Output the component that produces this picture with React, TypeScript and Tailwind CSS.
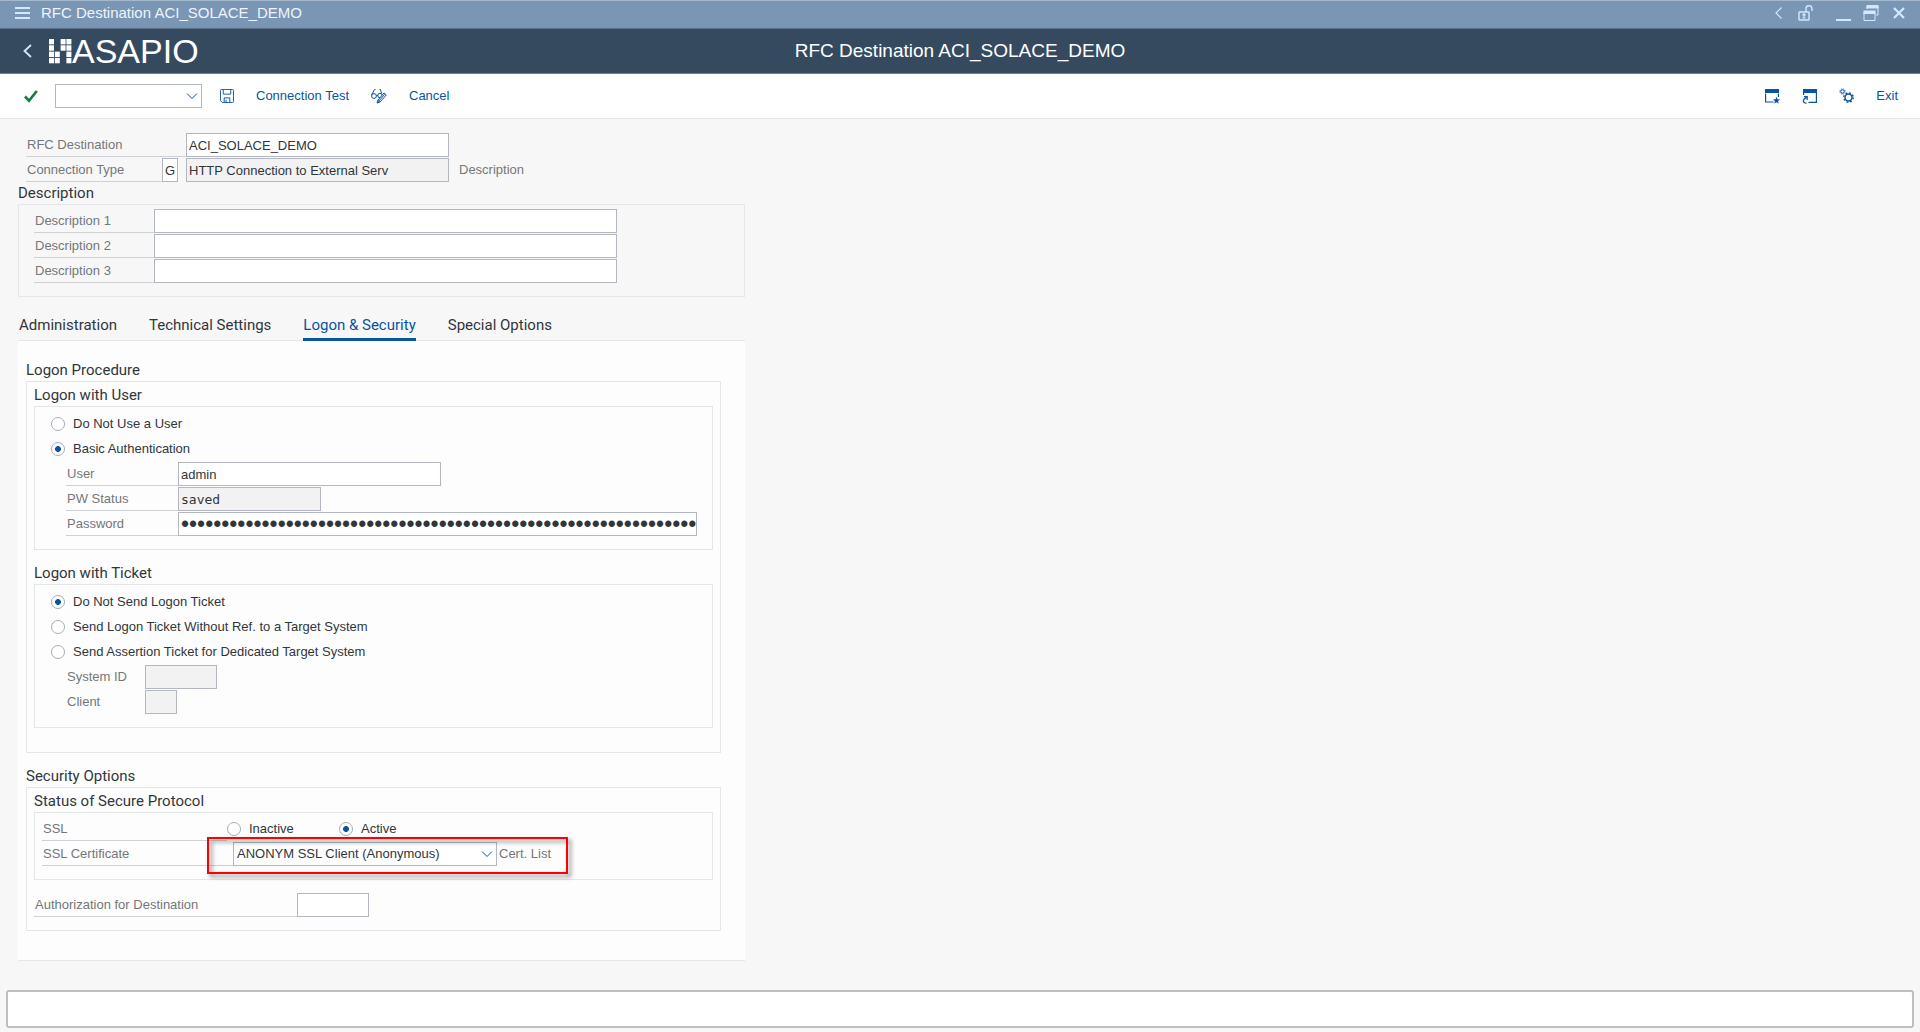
import type { ReactNode } from "react";

const title = "RFC Destination ACI_SOLACE_DEMO";
const tabs = ["Administration", "Technical Settings", "Logon & Security", "Special Options"];
const activeTab = "Logon & Security";
const descriptions = ["Description 1", "Description 2", "Description 3"];
const logoRows = ["1011", "1011", "1101", "1101"];

const box = "h-6 shrink-0 border border-[#b3b8c0] text-[#32363a] outline-none";

type LabelProps = { htmlFor?: string; className: string; line?: boolean; children: ReactNode };

function Label({ htmlFor, className, line = true, children }: LabelProps) {
  return (
    <label
      htmlFor={htmlFor}
      className={`h-6 shrink-0 border-b pl-px leading-6 text-[#74777a] ${line ? "border-[#cfd1d4]" : "border-transparent"} ${className}`}
    >
      {children}
    </label>
  );
}

type FieldProps = {
  id: string;
  label: string;
  value?: string;
  labelClass: string;
  inputClass: string;
  line?: boolean;
  readOnly?: boolean;
  type?: string;
};

function Field({ id, label, value = "", labelClass, inputClass, line, readOnly = false, type = "text" }: FieldProps) {
  return (
    <div className="flex h-[25px] items-start">
      <Label htmlFor={id} className={labelClass} line={line}>
        {label}
      </Label>
      <input
        id={id}
        type={type}
        defaultValue={value}
        readOnly={readOnly}
        className={`${box} pl-0.5 ${readOnly ? "bg-[#f2f2f2]" : "bg-white"} ${inputClass}`}
      />
    </div>
  );
}

type RadioProps = { name: string; label: string; checked?: boolean; className?: string };

function Radio({ name, label, checked = false, className = "" }: RadioProps) {
  return (
    <label className={`mb-px flex h-6 items-center gap-2 text-[#32363a] ${className}`}>
      <input
        type="radio"
        name={name}
        defaultChecked={checked}
        className="size-[14px] shrink-0 appearance-none rounded-full border border-[#a5adb6] bg-white checked:bg-[radial-gradient(circle,#0854a0_0_2.6px,transparent_3.2px)]"
      />
      {label}
    </label>
  );
}

function Group({ title, className = "", children }: { title: string; className?: string; children: ReactNode }) {
  return (
    <section>
      <h2 className="font-[Roboto,sans-serif] text-[15px] leading-[21px] text-[#32363a]">{title}</h2>
      <div className={`border border-[#e5e6e7] ${className}`}>{children}</div>
    </section>
  );
}

type SelectProps = { id: string; label?: string; value?: string; className: string };

function Select({ id, label, value = "", className }: SelectProps) {
  return (
    <div className={`relative h-6 ${className}`}>
      <select id={id} aria-label={label} className={`${box} w-full appearance-none bg-white pl-[3px]`}>
        <option>{value}</option>
      </select>
      <svg viewBox="0 0 12 12" className="pointer-events-none absolute top-1.5 right-1 size-3" fill="none" stroke="#0854a0">
        <path d="M1 3.5 6 8.5 11 3.5" />
      </svg>
    </div>
  );
}

function Logo() {
  return (
    <div className="flex items-center text-white">
      <svg viewBox="0 0 23 25" className="h-[25px] w-[23px]" fill="currentColor">
        {logoRows.map((row, y) =>
          [...row].map((cell, x) =>
            cell === "1" ? <rect key={`${x}-${y}`} x={x * 5.8} y={y * 6.3} width="5" height="5.4" /> : null
          )
        )}
      </svg>
      <span className="text-[34px] leading-none">ASAPIO</span>
    </div>
  );
}

function TopBar() {
  return (
    <div className="flex h-7 items-center border-t border-[#a3b8cd] bg-[#7996b5] pr-[15px] pb-1 pl-[15px] text-[#d1e8ff]">
      <button aria-label="Menu" className="mr-[11px]">
        <svg viewBox="0 0 15 14" className="h-[14px] w-[15px]" fill="currentColor">
          <path d="M0 1h15v2H0zM0 6h15v2H0zM0 11h15v2H0z" />
        </svg>
      </button>
      <span className="text-[15px] leading-6 text-[#edf4fb]">{title}</span>
      <div className="ml-auto flex items-center">
        <button aria-label="Previous" className="mr-4">
          <svg viewBox="0 0 7 12" className="h-3 w-[7px]" fill="none" stroke="currentColor" strokeWidth="1.2">
            <path d="M6.5.5 1 6l5.5 5.5" />
          </svg>
        </button>
        <button aria-label="Unlock" className="mr-[22px]">
          <svg viewBox="0 0 16 16" className="size-4" fill="none" stroke="currentColor" strokeWidth="1.4">
            <rect x="1" y="7" width="10" height="8" rx=".6" />
            <path d="M8 7V4a3 3 0 0 1 6-.5V6" />
            <path d="M6 9v4M4.5 10.2 6 8.8l1.5 1.4M4.5 13h3" strokeWidth="1.2" />
          </svg>
        </button>
        <button aria-label="Minimize" className="mr-3">
          <svg viewBox="0 0 15 16" className="h-4 w-[15px]" stroke="currentColor" strokeWidth="2">
            <path d="M0 15h15" />
          </svg>
        </button>
        <button aria-label="Restore" className="mr-[14px]">
          <svg viewBox="0 0 16 16" className="size-4" fill="none" stroke="currentColor">
            <path d="M4 4V1.5h11V10h-2" />
            <path d="M3.5 0h12v3.5h-12zM.5 5.500h12V9H.5z" fill="currentColor" stroke="none" />
            <path d="M1 7h11v8.5H1z" />
          </svg>
        </button>
        <button aria-label="Close">
          <svg viewBox="0 0 12 12" className="size-3" stroke="currentColor" strokeWidth="2.2">
            <path d="m1 1 10 10M11 1 1 11" />
          </svg>
        </button>
      </div>
    </div>
  );
}

function Header() {
  return (
    <header className="grid h-[46px] grid-cols-[1fr_auto_1fr] items-center border-y border-t-[#5c728a] border-b-[#6f8296] bg-[#354a5f] px-[23px]">
      <div className="flex items-center gap-[17px]">
        <button aria-label="Back">
          <svg viewBox="0 0 9 14" className="h-[14px] w-[9px]" fill="none" stroke="#d1e8ff" strokeWidth="1.8">
            <path d="M8 1 1.5 7 8 13" />
          </svg>
        </button>
        <Logo />
      </div>
      <h1 className="text-[19px] leading-7 text-white">{title}</h1>
    </header>
  );
}

function Toolbar() {
  return (
    <div className="flex h-[45px] items-center border-b border-[#e5e5e5] bg-white pr-[22px] pl-6 text-[#0854a0]">
      <button aria-label="Enter" className="mr-[17px]">
        <svg viewBox="0 0 14 14" className="size-[14px]" fill="none" stroke="#107e3e" strokeWidth="2.6">
          <path d="m1 7.5 4 4.2L12.8 2" />
        </svg>
      </button>
      <Select id="command" label="Command" className="w-[147px]" />
      <button aria-label="Save" className="ml-[18px]">
        <svg viewBox="0 0 15 15" className="size-[14px]" fill="none" stroke="currentColor">
          <path d="M1.5.5h12a1 1 0 0 1 1 1v12a1 1 0 0 1-1 1h-11l-2-2v-11a1 1 0 0 1 1-1z" />
          <path d="M3.5.5v5h8v-5M4.5 14.5v-5h6v5M6.5 11.5v3" />
        </svg>
      </button>
      <button className="ml-[22px] leading-6">Connection Test</button>
      <button aria-label="Display or change" className="ml-[22px]">
        <svg viewBox="0 0 16 16" className="size-4" fill="none" stroke="currentColor">
          <circle cx="3" cy="8" r="2.4" />
          <circle cx="9" cy="7.5" r="2.2" />
          <path d="M.6 7 3.5 1.5h1M5.4 7.5h1.400M10.5 5.5 9.5 1.5h-1" />
          <path d="m6 15 .8-2.8L13 5l2.3 2L9 14z" fill="#fff" />
          <path d="m7.5 13.5 6-7M6.8 12.2l2 1.8" />
        </svg>
      </button>
      <button className="ml-[22px] leading-6">Cancel</button>
      <div className="ml-auto flex items-center gap-[21px]">
        <button aria-label="New session">
          <svg viewBox="0 0 16 15" className="h-[15px] w-4" fill="none" stroke="currentColor" strokeWidth="1.2">
            <path d="M.6 4.5V13h8M13.4 4.5V8" />
            <path
              d="M0 0h14v4H0zM11.5 7.8l1 2.4 2.6.2-2 1.7.6 2.5-2.2-1.3-2.2 1.3.6-2.5-2-1.7 2.6-.2z"
              fill="currentColor"
              stroke="none"
            />
          </svg>
        </button>
        <button aria-label="Create shortcut">
          <svg viewBox="0 0 16 15" className="h-[15px] w-4" fill="none" stroke="currentColor" strokeWidth="1.2">
            <path d="M1.6 6V4M14.4 4v9.4H6.5" />
            <path d="M1 0h14v4H1z" fill="currentColor" stroke="none" />
            <path d="M4.5 14.4C.5 14 .2 10.5 4.5 8.5M2 7.6h3.2V11" />
          </svg>
        </button>
        <button aria-label="Settings">
          <svg viewBox="0 0 16 16" className="size-4" fill="none" stroke="currentColor">
            <circle cx="9.5" cy="9.5" r="3.5" strokeWidth="1.4" />
            <circle cx="9.5" cy="9.5" r="4.7" strokeWidth="1.4" strokeDasharray="1.85 1.85" />
            <circle cx="3.5" cy="3.5" r="1.7" />
            <circle cx="3.5" cy="3.5" r="2.6" strokeDasharray="1.02 1.02" />
          </svg>
        </button>
        <button className="leading-6">Exit</button>
      </div>
    </div>
  );
}

function LogonProcedure() {
  return (
    <Group title="Logon Procedure" className="px-[7px] pt-[3px] pb-6">
      <Group title="Logon with User" className="pt-[5px] pb-3">
        <div className="pl-4">
          <Radio name="logon-user" label="Do Not Use a User" />
          <Radio name="logon-user" label="Basic Authentication" checked />
        </div>
        <div className="pl-[31px]">
          <Field id="user" label="User" value="admin" labelClass="w-[112px]" inputClass="w-[263px]" />
          <Field
            id="pw-status"
            label="PW Status"
            value="saved"
            labelClass="w-[112px]"
            inputClass="w-[143px] font-['DejaVu_Sans_Mono',monospace]"
            readOnly
          />
          <Field
            id="password"
            type="password"
            label="Password"
            value={"x".repeat(64)}
            labelClass="w-[112px]"
            inputClass="w-[519px] text-[23px]"
          />
        </div>
      </Group>
      <div className="mt-[13px]">
        <Group title="Logon with Ticket" className="pt-[5px] pb-3">
          <div className="pl-4">
            <Radio name="logon-ticket" label="Do Not Send Logon Ticket" checked />
            <Radio name="logon-ticket" label="Send Logon Ticket Without Ref. to a Target System" />
            <Radio name="logon-ticket" label="Send Assertion Ticket for Dedicated Target System" />
          </div>
          <div className="pl-[31px]">
            <Field id="system-id" label="System ID" labelClass="w-[79px]" inputClass="w-[72px]" line={false} readOnly />
            <Field id="client" label="Client" labelClass="w-[79px]" inputClass="w-8" line={false} readOnly />
          </div>
        </Group>
      </div>
    </Group>
  );
}

function SecurityOptions() {
  return (
    <Group title="Security Options" className="px-[7px] pt-[3px] pb-3">
      <Group title="Status of Secure Protocol" className="pt-1 pb-3 pl-[7px]">
        <div className="flex h-[25px] items-start">
          <Label className="w-[185px]">SSL</Label>
          <Radio name="ssl" label="Inactive" className="w-28" />
          <Radio name="ssl" label="Active" checked />
        </div>
        <div className="relative flex h-[25px] items-start">
          <Label htmlFor="certificate" className="w-[191px]">
            SSL Certificate
          </Label>
          <Select id="certificate" value="ANONYM SSL Client (Anonymous)" className="w-[264px]" />
          <span className="pl-0.5 leading-6 text-[#74777a]">Cert. List</span>
          <div className="pointer-events-none absolute -top-[5px] left-[165px] h-[37px] w-[361px] border-2 border-[#fe0000] drop-shadow-[3px_3px_2px_rgba(0,0,0,0.5)]" />
        </div>
      </Group>
      <div className="mt-[13px]">
        <Field id="authorization" label="Authorization for Destination" labelClass="w-[263px]" inputClass="w-[72px]" />
      </div>
    </Group>
  );
}

export default function App() {
  return (
    <div className="flex min-h-screen flex-col bg-[#f7f7f7] font-['Liberation_Sans',sans-serif] text-[13px]">
      <TopBar />
      <Header />
      <Toolbar />
      <main className="w-full max-w-[745px] pt-[14px] pl-[18px]">
        <div className="pl-2">
          <Field id="destination" label="RFC Destination" value="ACI_SOLACE_DEMO" labelClass="w-[160px]" inputClass="w-[263px]" />
          <div className="flex h-[25px] items-start">
            <Label htmlFor="type" className="w-[136px]">
              Connection Type
            </Label>
            <input id="type" defaultValue="G" className={`${box} mr-2 w-4 bg-white pl-0.5`} />
            <input
              aria-label="Connection type text"
              readOnly
              value="HTTP Connection to External Serv"
              className={`${box} w-[263px] bg-[#f2f2f2] pl-0.5`}
            />
            <span className="pl-2.5 leading-6 text-[#74777a]">Description</span>
          </div>
        </div>

        <Group title="Description" className="pt-1 pb-3 pl-[15px]">
          {descriptions.map((name) => (
            <Field key={name} id={name} label={name} labelClass="w-[120px]" inputClass="w-[463px]" />
          ))}
        </Group>

        <nav className="mt-4 flex gap-8 border-b border-[#e5e6e7] pl-px font-[Roboto,sans-serif] text-[15px]">
          {tabs.map((tab) => (
            <button
              key={tab}
              className={`-mb-px h-7 border-b-[3px] ${tab === activeTab ? "border-[#0854a0] text-[#0854a0]" : "border-transparent text-[#32363a]"}`}
            >
              {tab}
            </button>
          ))}
        </nav>
        <div className="border-b border-[#e5e6e7] bg-[#fdfdfd] pt-[19px] pr-6 pb-[29px] pl-2">
          <LogonProcedure />
          <div className="mt-[13px]">
            <SecurityOptions />
          </div>
        </div>
      </main>
      <footer className="mx-1.5 mt-auto mb-1 h-[38px] rounded-[3px] border-2 border-[#bfbfbf] bg-white" />
    </div>
  );
}
